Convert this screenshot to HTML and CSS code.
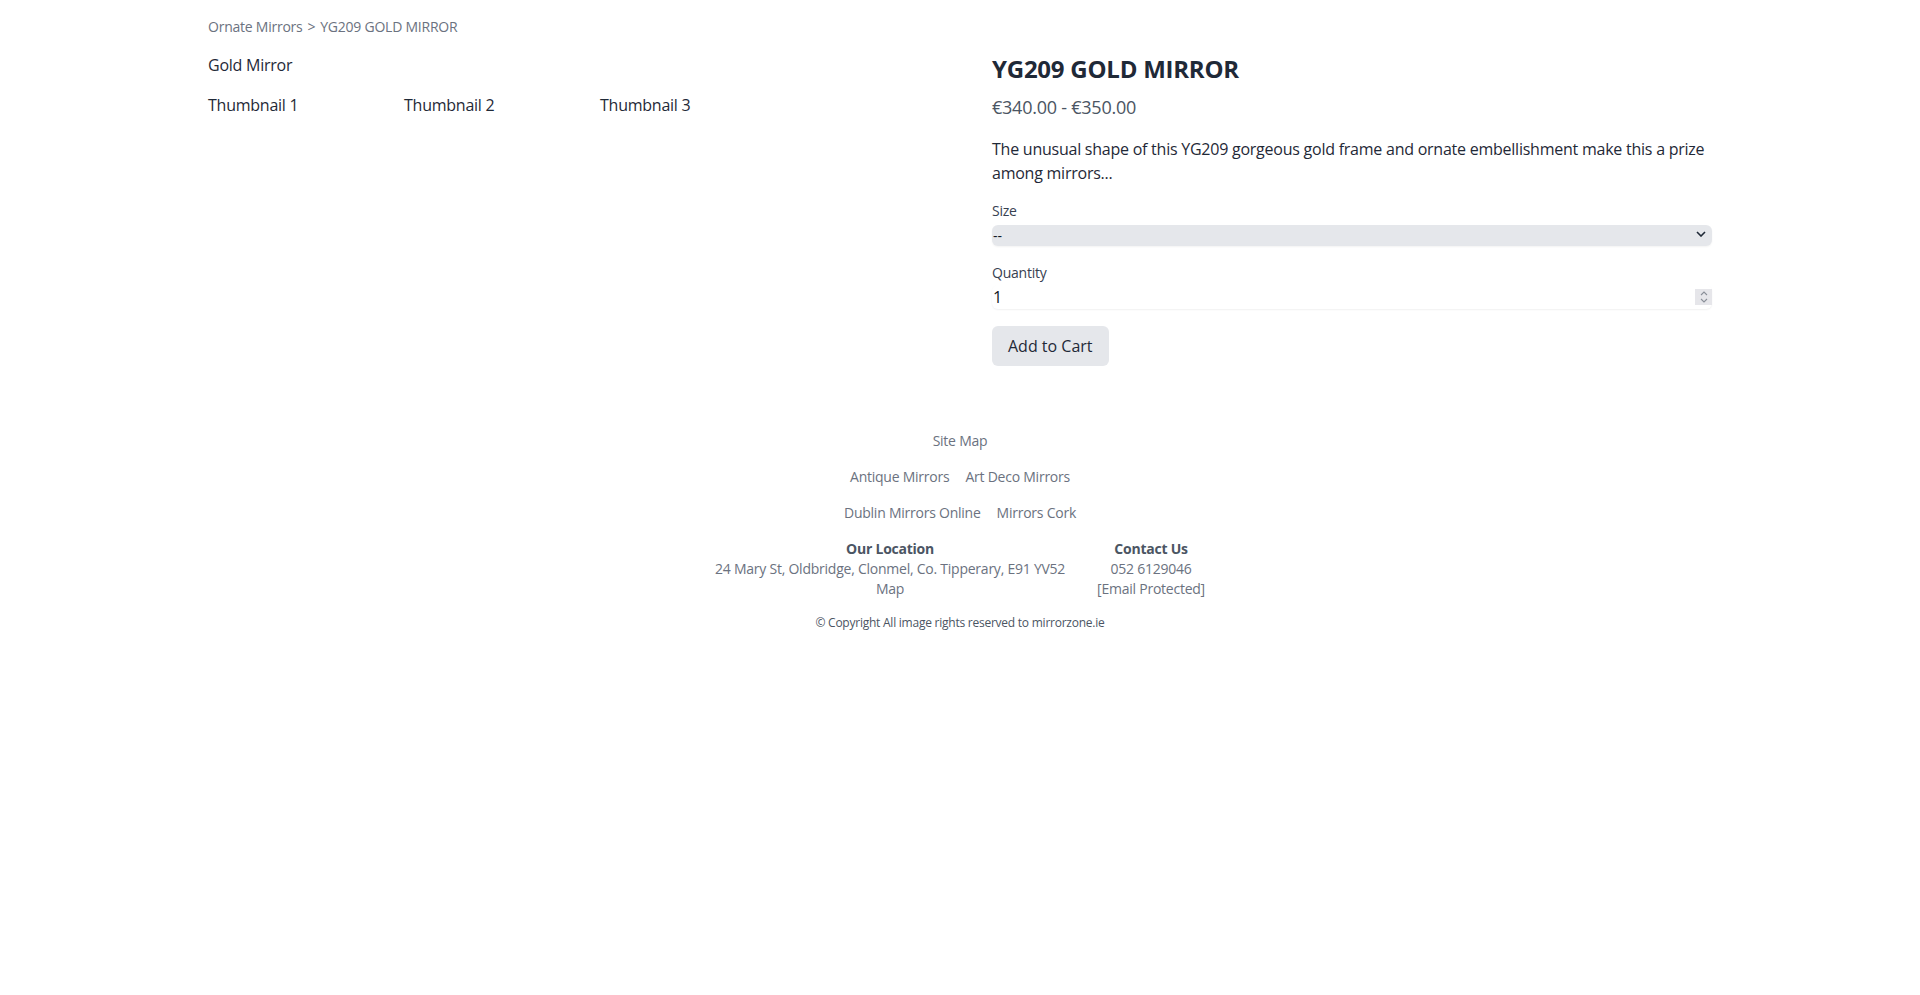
FILE: index.html
```html
<!DOCTYPE html>
<html lang="en">
<head>
<meta charset="utf-8">
<title>YG209 GOLD MIRROR</title>
<link rel="stylesheet" href="styles.css">
</head>
<body>
<main class="page">
  <nav class="crumbs"><a href="#">Ornate Mirrors</a><span class="sep">&gt;</span><span>YG209 GOLD MIRROR</span></nav>
  <div class="product">
    <section class="gallery">
      <div class="main-image">Gold Mirror</div>
      <div class="thumbs">
        <div class="thumb">Thumbnail 1</div>
        <div class="thumb">Thumbnail 2</div>
        <div class="thumb">Thumbnail 3</div>
      </div>
    </section>
    <section class="details">
      <h1 class="title">YG209 GOLD MIRROR</h1>
      <p class="price">€340.00 - €350.00</p>
      <p class="desc">The unusual shape of this YG209 gorgeous gold frame and ornate embellishment make this a prize among mirrors...</p>
      <form class="form">
        <label class="label" for="size">Size</label>
        <div class="select-wrap">
          <select id="size" class="select"><option>--</option></select>
          <svg class="chev" width="10" height="6" viewBox="0 0 10 6"><path d="M1 1l4 4 4-4" fill="none" stroke="#1f2937" stroke-width="1.6"/></svg>
        </div>
        <label class="label" for="qty">Quantity</label>
        <div class="input-wrap">
          <input id="qty" class="input" type="text" value="1">
          <span class="spin"><svg width="10" height="14" viewBox="0 0 10 14"><path d="M2 5l3-3 3 3M2 9l3 3 3-3" fill="none" stroke="#8a8f98" stroke-width="1.1"/></svg></span>
        </div>
        <button type="button" class="btn">Add to Cart</button>
      </form>
    </section>
  </div>
</main>
<footer class="footer">
  <div class="frow"><a href="#">Site Map</a></div>
  <div class="frow"><a href="#">Antique Mirrors</a><a href="#">Art Deco Mirrors</a></div>
  <div class="frow"><a href="#">Dublin Mirrors Online</a><a href="#">Mirrors Cork</a></div>
  <div class="cols">
    <div class="col">
      <strong>Our Location</strong>
      <span>24 Mary St, Oldbridge, Clonmel, Co. Tipperary, E91 YV52</span>
      <a href="#">Map</a>
    </div>
    <div class="col">
      <strong>Contact Us</strong>
      <span>052 6129046</span>
      <a href="#">[Email Protected]</a>
    </div>
  </div>
  <p class="copy">© Copyright All image rights reserved to mirrorzone.ie</p>
</footer>
</body>
</html>
```

FILE: styles.css
```css
* { box-sizing: border-box; }
html, body { margin: 0; padding: 0; }
body {
  font-family: "Open Sans", "Noto Sans", sans-serif;
  color: #1f2937;
  background: #fff;
  font-size: 16px;
  line-height: 24px;
  letter-spacing: -0.015em;
}
a { color: inherit; text-decoration: none; }
p, h1 { margin: 0; }

.page {
  max-width: 1536px;
  margin: 0 auto;
  padding: 17px 16px 0 16px;
}
.crumbs {
  font-size: 14px;
  line-height: 20px;
  color: #6b7280;
  margin-bottom: 16px;
}
.sep { margin: 0 5px; }
.product {
  display: grid;
  grid-template-columns: 1fr 1fr;
  gap: 64px;
}
.main-image { margin-bottom: 16px; }
.thumbs { display: flex; gap: 16px; }
.thumb { width: 180px; }

.title {
  font-size: 24px;
  line-height: 32px;
  font-weight: 700;
  color: #1f2937;
  margin-bottom: 8px;
}
.price {
  font-size: 18px;
  line-height: 28px;
  color: #4b5563;
  margin-bottom: 16px;
}
.desc { margin-bottom: 16px; color: #1f2937; }
.form { display: flex; flex-direction: column; align-items: stretch; }
.label {
  font-size: 14px;
  line-height: 20px;
  color: #374151;
  margin-bottom: 2px;
}
.select-wrap { position: relative; margin-bottom: 16px; }
.select {
  -webkit-appearance: none;
  appearance: none;
  width: 100%;
  height: 21px;
  border: 0;
  border-radius: 6px;
  background: #e5e7eb;
  font: inherit;
  font-size: 14px;
  line-height: 21px;
  padding: 0 0 0 1px;
  color: #111827;
  box-shadow: 0 1px 2px rgba(0,0,0,0.05);
}
.chev { position: absolute; right: 6px; top: 8px; pointer-events: none; }
.input-wrap { position: relative; margin-bottom: 17px; }
.input {
  width: 100%;
  height: 24px;
  border: 0;
  border-radius: 6px;
  background: #fff;
  font: inherit;
  font-size: 16px;
  padding: 0 0 0 1px;
  color: #111827;
  box-shadow: 0 1px 2px rgba(0,0,0,0.06);
}
.spin {
  position: absolute;
  right: 0;
  top: 4px;
  width: 17px;
  height: 16px;
  background: #e6e6ea;
  display: flex;
  align-items: center;
  justify-content: center;
}
.btn {
  align-self: flex-start;
  height: 40px;
  padding: 0 16px;
  border: 0;
  border-radius: 6px;
  background: #e5e7eb;
  font: inherit;
  font-size: 16px;
  color: #1f2937;
}

.footer {
  margin-top: 65px;
  text-align: center;
  font-size: 14px;
  line-height: 20px;
  color: #6b7280;
}
.frow {
  display: flex;
  justify-content: center;
  gap: 16px;
  margin-bottom: 16px;
}
.cols {
  display: flex;
  justify-content: center;
  gap: 32px;
}
.col { display: flex; flex-direction: column; align-items: center; }
.col strong { color: #4b5563; font-weight: 700; }
.copy {
  margin-top: 16px;
  font-size: 12px;
  line-height: 16px;
  color: #4b5563;
}
```
